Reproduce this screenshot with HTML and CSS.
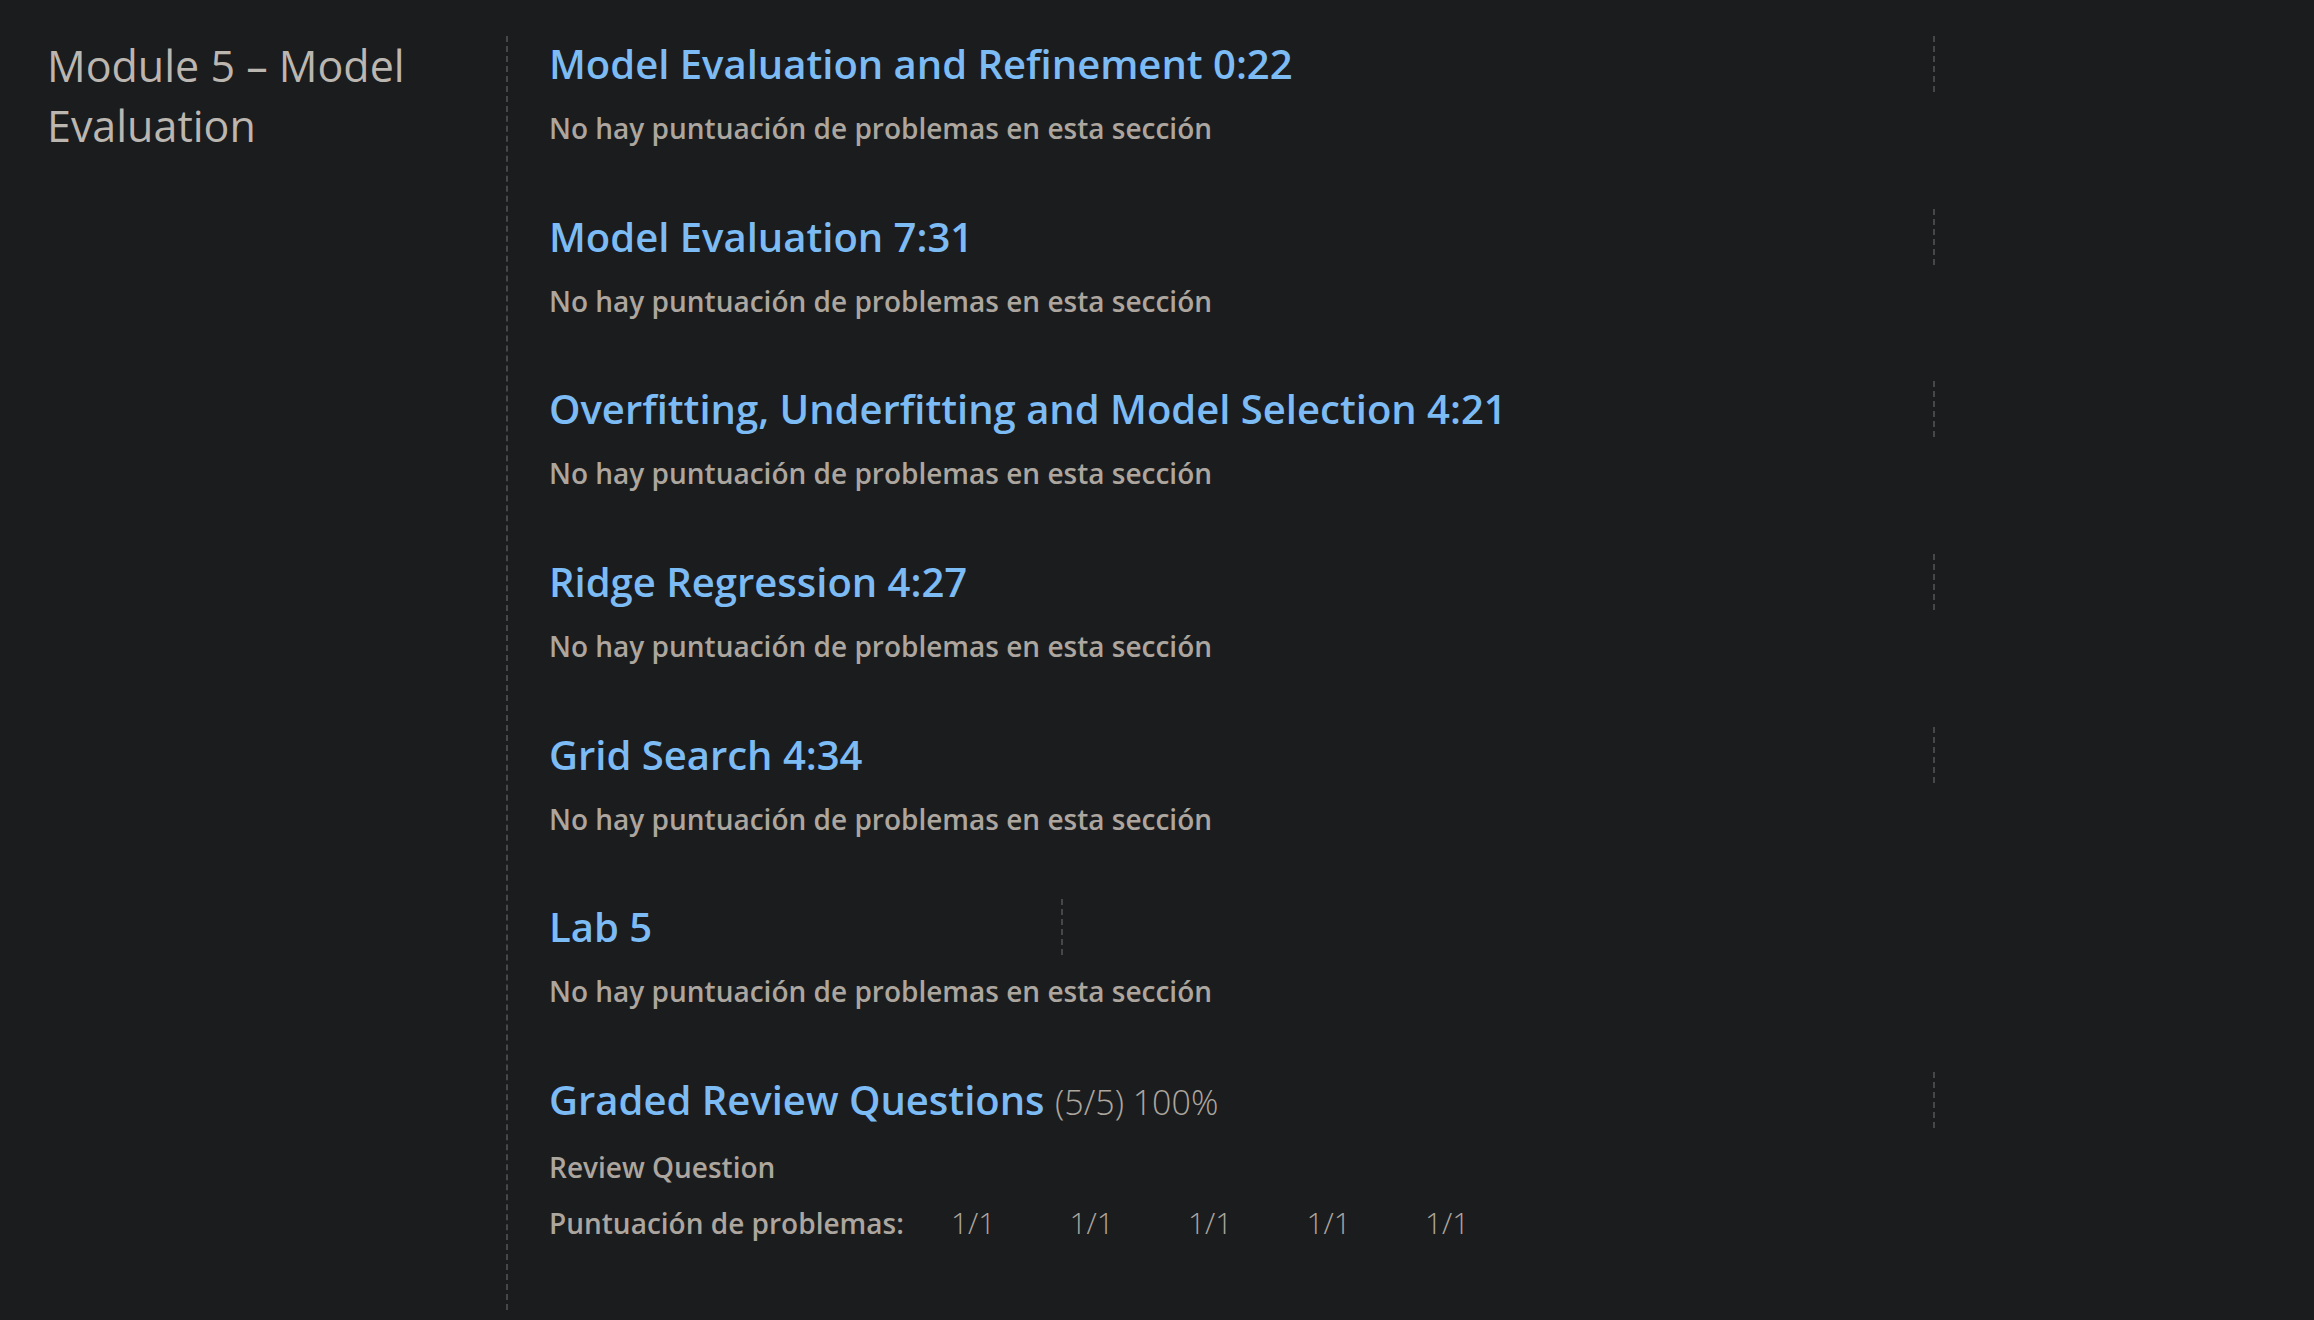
FILE: index.html
```html
<!DOCTYPE html>
<html lang="es">
<head>
<meta charset="utf-8">
<title>Module 5 – Model Evaluation</title>
<link rel="stylesheet" href="styles.css">
</head>
<body>
<div class="page">
  <h2 class="module-title">Module 5 – Model Evaluation</h2>
  <ol class="sections">
    <li class="section">
      <div class="section-head">
        <h3 class="section-title"><a href="#">Model Evaluation and Refinement 0:22</a></h3>
        <div class="section-meta"></div>
      </div>
      <p class="section-note">No hay puntuación de problemas en esta sección</p>
    </li>
    <li class="section">
      <div class="section-head">
        <h3 class="section-title"><a href="#">Model Evaluation 7:31</a></h3>
        <div class="section-meta"></div>
      </div>
      <p class="section-note">No hay puntuación de problemas en esta sección</p>
    </li>
    <li class="section">
      <div class="section-head">
        <h3 class="section-title"><a href="#">Overfitting, Underfitting and Model Selection 4:21</a></h3>
        <div class="section-meta"></div>
      </div>
      <p class="section-note">No hay puntuación de problemas en esta sección</p>
    </li>
    <li class="section">
      <div class="section-head">
        <h3 class="section-title"><a href="#">Ridge Regression 4:27</a></h3>
        <div class="section-meta"></div>
      </div>
      <p class="section-note">No hay puntuación de problemas en esta sección</p>
    </li>
    <li class="section">
      <div class="section-head">
        <h3 class="section-title"><a href="#">Grid Search 4:34</a></h3>
        <div class="section-meta"></div>
      </div>
      <p class="section-note">No hay puntuación de problemas en esta sección</p>
    </li>
    <li class="section">
      <div class="section-head">
        <h3 class="section-title section-title--short"><a href="#">Lab 5</a></h3>
        <div class="section-meta"></div>
      </div>
      <p class="section-note">No hay puntuación de problemas en esta sección</p>
    </li>
    <li class="section">
      <div class="section-head">
        <h3 class="section-title"><a href="#">Graded Review Questions</a> <span class="section-score">(5/5) 100%</span></h3>
        <div class="section-meta"></div>
      </div>
      <p class="section-sub">Review Question</p>
      <div class="scores">
        <span class="scores-label">Puntuación de problemas:</span>
        <ol class="scores-list">
          <li>1/1</li>
          <li>1/1</li>
          <li>1/1</li>
          <li>1/1</li>
          <li>1/1</li>
        </ol>
      </div>
    </li>
  </ol>
</div>
</body>
</html>
```

FILE: styles.css
```css
html, body {
  margin: 0;
  padding: 0;
  background: #1b1c1e;
}

body {
  font-family: "Open Sans", "Noto Sans", "Liberation Sans", sans-serif;
  color: #aca69f;
}

.page {
  box-sizing: border-box;
  display: flex;
  height: 1310px;
  padding-top: 36px;
}

.module-title {
  box-sizing: border-box;
  width: 506px;
  flex: none;
  margin: 0;
  padding: 0 60px 0 47px;
  font-size: 43px;
  line-height: 60px;
  font-weight: 400;
  color: #bbb6b0;
}

.sections {
  list-style: none;
  margin: 0;
  padding: 0 0 0 41px;
  border-left: 2px dashed #45474b;
  flex: 1;
}

.section {
  padding-bottom: 60.67px;
}

.section-head {
  display: flex;
  align-items: stretch;
  height: 56px;
}

.section-title {
  width: 1384px;
  flex: none;
  margin: 0;
  font-size: 40px;
  line-height: 56px;
  font-weight: 600;
  white-space: nowrap;
}

.section-title--short {
  width: 512px;
}

.section-title a {
  color: #7cbbf4;
  text-decoration: none;
}

.section-score {
  font-size: 34px;
  font-weight: 300;
  color: #aca69f;
}

.section-meta {
  border-left: 2px dashed #45474b;
  width: 40px;
}

.section-note {
  margin: 16px 0 0;
  font-size: 28px;
  line-height: 40px;
  font-weight: 600;
}

.section-sub {
  margin: 21px 0 0;
  font-size: 28px;
  line-height: 36px;
  font-weight: 600;
}

.scores {
  display: flex;
  align-items: baseline;
  margin-top: 18px;
  font-size: 28px;
  line-height: 40px;
}

.scores-label {
  font-weight: 600;
  width: 402px;
  flex: none;
}

.scores-list {
  list-style: none;
  display: flex;
  margin: 0;
  padding: 0;
  font-size: 30px;
  font-weight: 300;
}

.scores-list li {
  width: 118.5px;
}
```
